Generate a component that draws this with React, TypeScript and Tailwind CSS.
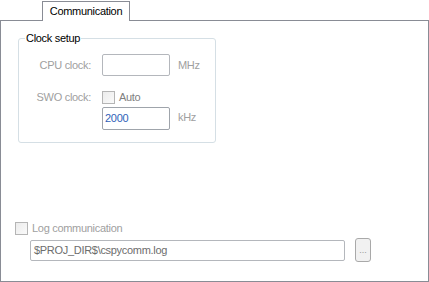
import React from 'react';

const font = { fontFamily: '"Liberation Sans", Arial, sans-serif' };

function CheckBox() {
  return (
    <span className="block w-[13px] h-[13px] border border-[#b5b5b5] bg-gradient-to-br from-[#ececec] to-[#fafafa] shrink-0" />
  );
}

export default function App() {
  return (
    <div className="w-[429px] h-[282px] bg-white text-[11px] tracking-[-0.3px] leading-none" style={font}>
      <div className="pt-[1px] pl-[42px] h-[21px]">
        <div className="relative z-10 w-[88px] h-[20px] border border-b-0 border-[#898c95] bg-white flex items-center justify-center text-black">
          Communication
        </div>
      </div>

      <div className="w-[429px] h-[262px] -mt-px border border-[#898c95] flex flex-col">
        {/* Clock setup group */}
        <div className="relative ml-[17px] mt-[17px] w-[198px] h-[105px] border border-[#d5dfe5] rounded-[3px]">
          <span className="absolute left-[6px] -top-[6px] bg-white px-[1px] text-black">Clock setup</span>

          <div className="grid grid-cols-[72px_68px_auto] gap-x-[11px] pt-[15px] text-[#a0a0a0]">
            <span className="self-center text-right">CPU clock:</span>
            <span className="h-[22px] border border-[#b4b7bc] rounded-[2px]" />
            <span className="self-center -ml-[3px]">MHz</span>

            <span className="self-center text-right mt-[15px]">SWO clock:</span>
            <span className="flex items-center gap-[4px] mt-[15px]">
              <CheckBox />
              <span className="text-[#808080]">Auto</span>
            </span>
            <span />

            <span />
            <span className="mt-[3px] h-[23px] border border-[#9fa4ab] rounded-[2px] flex items-center pl-[2px] text-[#2f62b8]">
              2000
            </span>
            <span className="self-end mb-[7px] -ml-[3px]">kHz</span>
          </div>
        </div>

        {/* Log communication */}
        <div className="ml-[14px] mt-[79px] flex items-center gap-[4px] h-[13px]">
          <CheckBox />
          <span className="text-[#a0a0a0]">Log communication</span>
        </div>
        <div className="ml-[29px] mt-[3px] flex items-center gap-[10px]">
          <div className="w-[315px] h-[21px] border border-[#b4b7bc] rounded-[2px] flex items-center pl-[3px] text-[#6d6d6d]">
            $PROJ_DIR$\cspycomm.log
          </div>
          <div className="w-[16px] h-[24px] border border-[#a9a9a9] rounded-[3px] bg-[#f1f1f1] flex items-end justify-center pb-[6px] text-[#9a9a9a] text-[9px] tracking-normal">
            ...
          </div>
        </div>
      </div>
    </div>
  );
}
